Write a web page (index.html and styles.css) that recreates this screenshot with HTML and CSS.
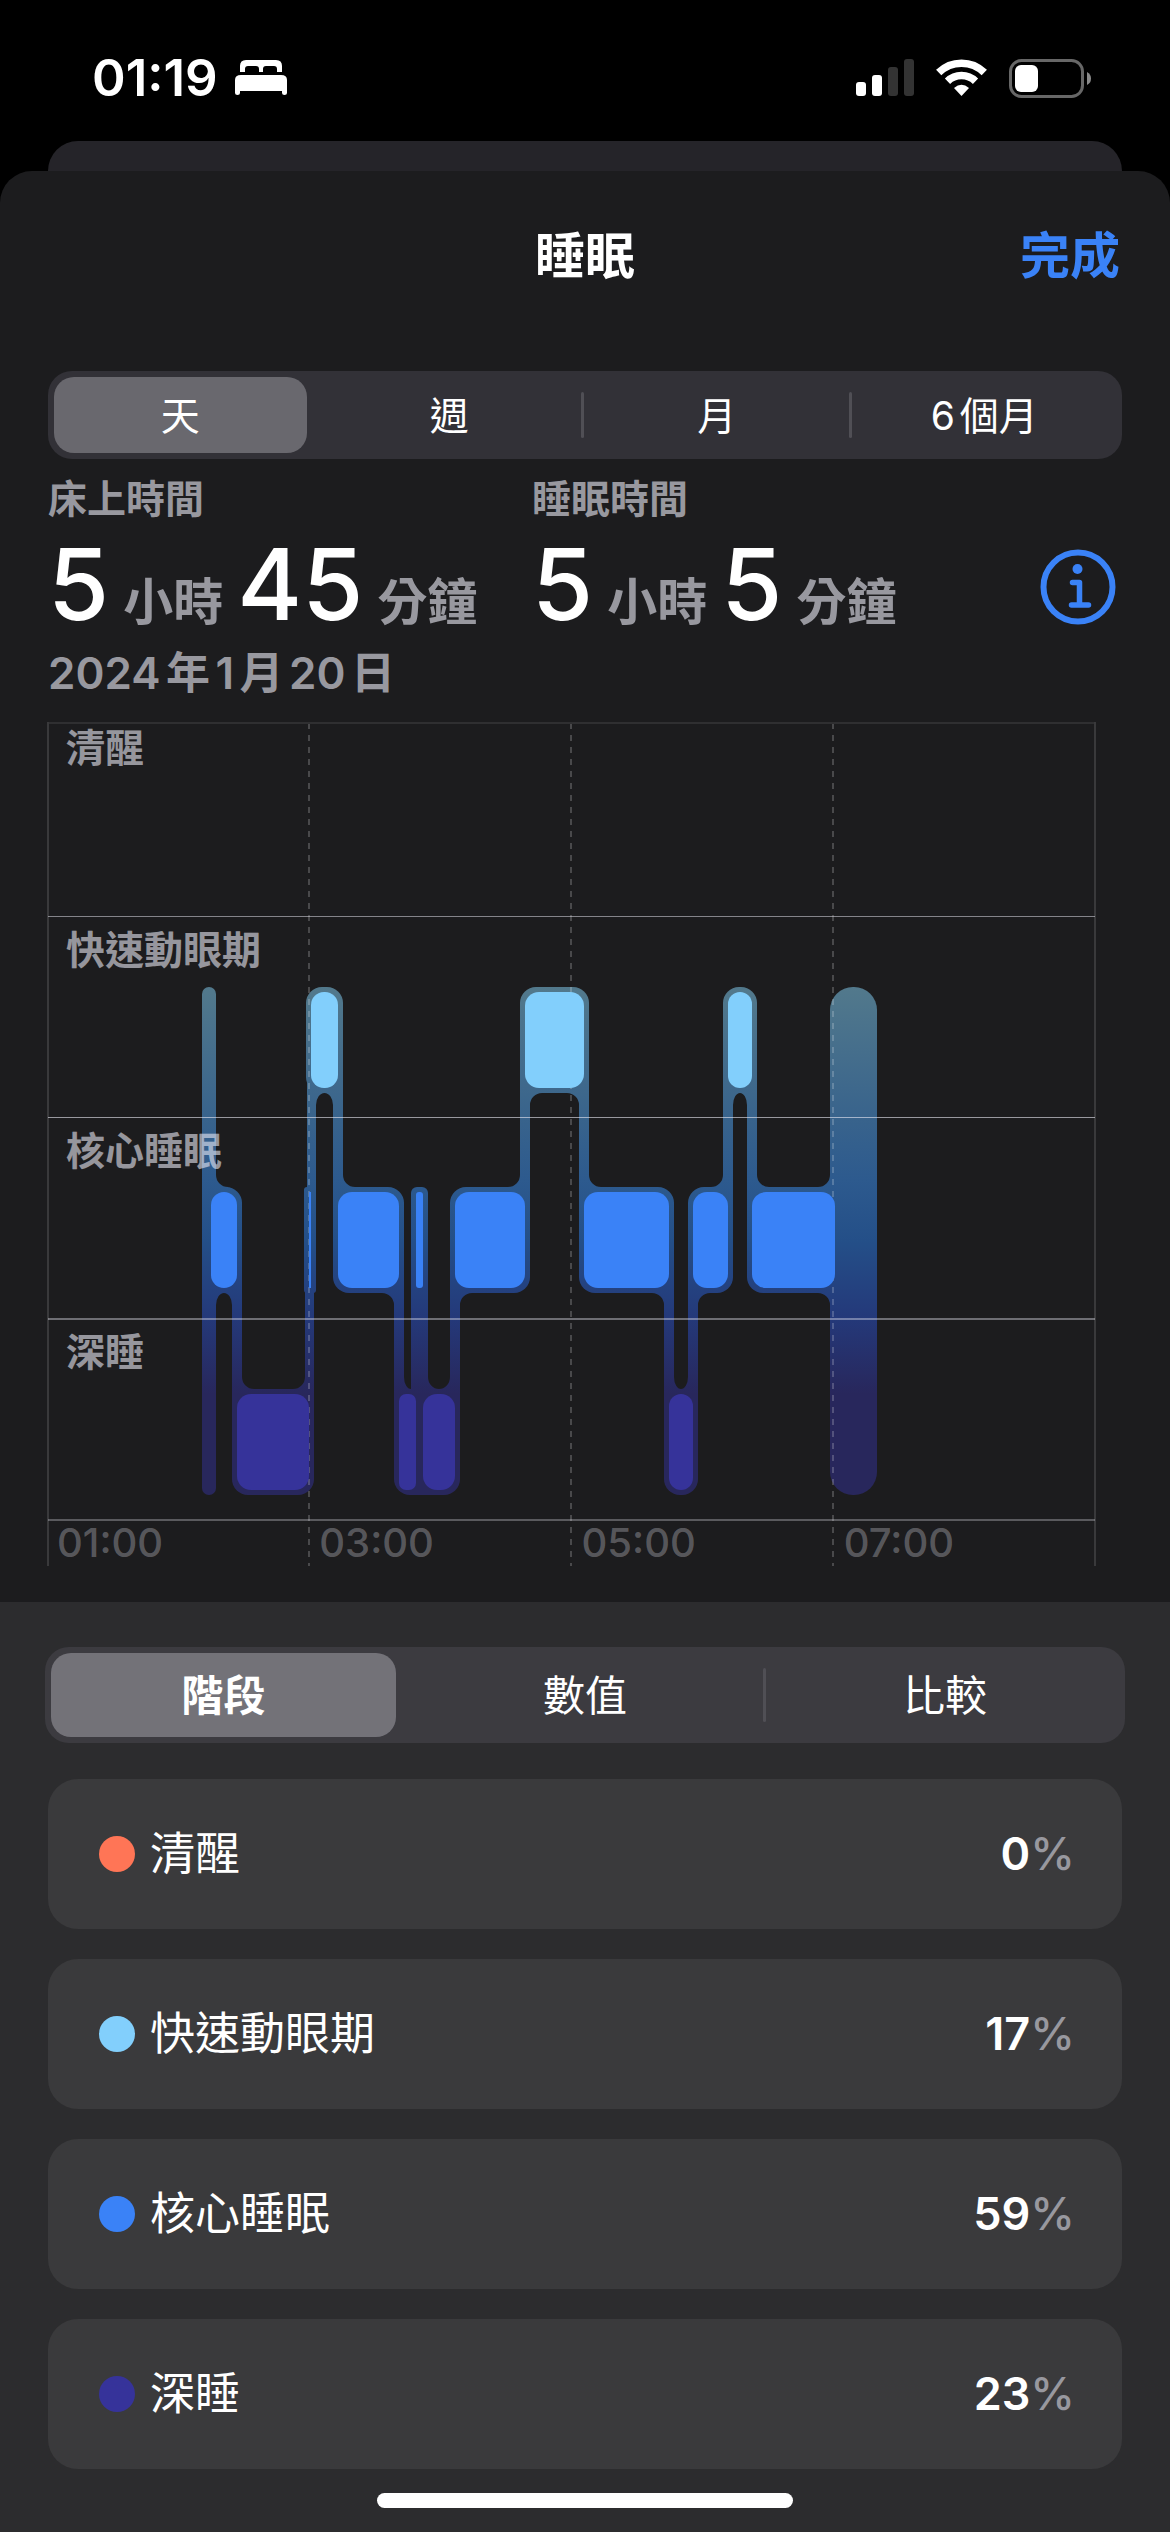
FILE: index.html
```html
<!DOCTYPE html>
<html lang="zh-Hant">
<head>
<meta charset="utf-8">
<meta name="viewport" content="width=device-width, initial-scale=1">
<title>睡眠</title>
<link rel="stylesheet" href="styles.css">
</head>
<body>
<div class="status-bar">
  <div class="status-left">
    <span class="clock">01:19</span>
    <svg class="icon" width="52" height="36" viewBox="0 0 52 36" fill="#fff" aria-hidden="true">
      <path d="M5 12V6q0-6 6-6h30q6 0 6 6v6h-5V9q0-3-3-3h-8q-3 0-3 3v3h-4V9q0-3-3-3h-8q-3 0-3 3v3z"/>
      <path d="M0 20q0-5 6-5h40q6 0 6 5v13q0 2-2.500 2T47 33v-2H5v2q0 2-2.500 2T0 33z"/>
    </svg>
  </div>
  <div class="status-right">
    <svg class="icon" width="58" height="38" viewBox="0 0 58 38" fill="#fff" aria-hidden="true">
      <rect x="0" y="23" width="10" height="14" rx="3"/>
      <rect x="16" y="16" width="10" height="21" rx="3"/>
      <rect x="32" y="8" width="10" height="29" rx="3" fill="#333"/>
      <rect x="48" y="0" width="10" height="37" rx="3" fill="#333"/>
    </svg>
    <svg class="icon" width="51" height="38" viewBox="0 0 51 38" aria-hidden="true">
      <g fill="none" stroke="#fff" stroke-width="7.500">
        <path d="M2.700 13.500a32.500 32.500 0 0 1 45.600 0"/>
        <path d="M11.500 22.300a20 20 0 0 1 28 0"/>
      </g>
      <path d="M25.500 37 18 29q7.500-6.500 15 0z" fill="#fff"/>
    </svg>
    <svg class="icon" width="82" height="39" viewBox="0 0 82 39" aria-hidden="true">
      <rect x="1.500" y="1.500" width="72" height="36" rx="11" fill="none" stroke="#676767" stroke-width="3"/>
      <rect x="6" y="6" width="23" height="27" rx="6" fill="#fff"/>
      <path d="M78 13q4 2 4 6.500T78 26z" fill="#8a8a8a"/>
    </svg>
  </div>
</div>
<div class="backdrop"></div>
<main class="sheet">
  <header class="sheet-header">
    <h1 class="title">睡眠</h1>
    <button class="done" type="button">完成</button>
  </header>

  <div class="segments range" role="group" aria-label="範圍">
    <button class="segment selected" type="button" aria-pressed="true">天</button>
    <button class="segment" type="button" aria-pressed="false">週</button>
    <button class="segment divided" type="button" aria-pressed="false">月</button>
    <button class="segment divided" type="button" aria-pressed="false">6個月</button>
  </div>

  <section class="summary">
    <div class="stat">
      <h2 class="stat-label">床上時間</h2>
      <p class="stat-value"><b>5</b><span>小時</span><b>45</b><span>分鐘</span></p>
    </div>
    <div class="stat">
      <h2 class="stat-label">睡眠時間</h2>
      <p class="stat-value"><b>5</b><span>小時</span><b>5</b><span>分鐘</span></p>
    </div>
    <button class="info" type="button" aria-label="資訊">
      <svg class="icon" width="76" height="76" viewBox="0 0 76 76" aria-hidden="true">
        <circle cx="38" cy="38" r="34.500" fill="none" stroke="#3a82f7" stroke-width="6"/>
        <circle cx="37.500" cy="20" r="5" fill="#3a82f7"/>
        <path d="M32.500 33.500h7V56M31.500 56h17" fill="none" stroke="#3a82f7" stroke-width="5.500" stroke-linecap="round" stroke-linejoin="round"/>
      </svg>
    </button>
  </section>
  <p class="date">2024年1月20日</p>

  <section class="chart" aria-label="睡眠階段">
    <svg class="plot" viewBox="47 722 1049 844" aria-hidden="true">
      <defs>
        <linearGradient id="stages" gradientUnits="userSpaceOnUse" x1="0" y1="987" x2="0" y2="1495">
          <stop offset="0" stop-color="#52798c"/>
          <stop offset=".26" stop-color="#38638c"/>
          <stop offset=".38" stop-color="#2d5a8e"/>
          <stop offset=".5" stop-color="#244f88"/>
          <stop offset=".65" stop-color="#24397a"/>
          <stop offset=".8" stop-color="#28275c"/>
          <stop offset="1" stop-color="#28275c"/>
        </linearGradient>
      </defs>
      <g fill="url(#stages)">
        <!-- time in bed -->
        <rect x="202" y="987" width="14" height="508" rx="7"/>
        <rect x="830" y="987" width="47" height="508" rx="23"/>
        <!-- REM -->
        <rect x="306" y="987" width="37" height="106" rx="16"/>
        <rect x="520" y="987" width="69" height="106" rx="16"/>
        <rect x="723" y="987" width="34" height="106" rx="16"/>
        <!-- core -->
        <rect x="206" y="1187" width="36" height="106" rx="16"/>
        <rect x="304" y="1187" width="12" height="106" rx="3"/>
        <rect x="333" y="1187" width="71" height="106" rx="16"/>
        <rect x="411" y="1187" width="17" height="106" rx="6"/>
        <rect x="450" y="1187" width="80" height="106" rx="16"/>
        <rect x="579" y="1187" width="95" height="106" rx="16"/>
        <rect x="688" y="1187" width="45" height="106" rx="16"/>
        <rect x="747" y="1187" width="93" height="106" rx="16"/>
        <!-- deep -->
        <rect x="232" y="1389" width="82" height="106" rx="16"/>
        <rect x="394" y="1389" width="66" height="106" rx="16"/>
        <rect x="664" y="1389" width="34" height="106" rx="16"/>
        <!-- transitions -->
        <path d="M232 1240h10v200h-10zM305 1240h9v200h-9zM307 1040h9v200h-9zM333 1040h10v200h-10zM394 1240h10v200h-10zM411 1240h17v200h-17zM450 1240h10v200h-10zM520 1040h10v200h-10zM579 1040h10v200h-10zM664 1240h10v200h-10zM688 1240h10v200h-10zM723 1040h10v200h-10zM747 1040h10v200h-10z"/>
        <!-- rounded joints -->
        <path d="M216 1189h12v-2a12 12 0 0 1-12-12zM343 1189h12v-2a12 12 0 0 1-12-12zM589 1189h12v-2a12 12 0 0 1-12-12zM757 1189h12v-2a12 12 0 0 1-12-12z"/>
        <path d="M520 1189h-12v-2a12 12 0 0 0 12-12zM723 1189h-12v-2a12 12 0 0 0 12-12zM830 1189h-12v-2a12 12 0 0 0 12-12z"/>
        <path d="M394 1291h-12v2a12 12 0 0 1 12 12zM664 1291h-12v2a12 12 0 0 1 12 12zM830 1291h-12v2a12 12 0 0 1 12 12zM460 1291h12v2a12 12 0 0 0-12 12zM698 1291h12v2a12 12 0 0 0-12 12z"/>
        <path d="M216 1291h16v14a8 12 0 0 0-8-12a8 12 0 0 0-8 12z"/>
        <path d="M316 1091h17v14a8.500 12 0 0 0-8.500-12a8.500 12 0 0 0-8.500 12zM733 1091h14v14a7 12 0 0 0-7-12a7 12 0 0 0-7 12zM530 1091h49v14a12 12 0 0 0-12-12h-25a12 12 0 0 0-12 12z"/>
        <path d="M242 1391h12v-2a12 12 0 0 1-12-12zM305 1391h-12v-2a12 12 0 0 0 12-12z"/>
        <path d="M404 1391h7v-2a7 12 0 0 1-7-12zM428 1391h22v-14a11 12 0 0 1-11 12a11 12 0 0 1-11-12zM674 1391h14v-14a7 12 0 0 1-7 12a7 12 0 0 1-7-12z"/>
      </g>
      <g stroke="#fff" stroke-opacity=".2" stroke-width="2" stroke-dasharray="6 6">
        <path d="M309 723v843M571 723v843M833 723v843"/>
      </g>
      <g fill="#82cffc">
        <rect x="311" y="992" width="27" height="96" rx="13"/>
        <rect x="525" y="992" width="59" height="96" rx="14"/>
        <rect x="728" y="992" width="24" height="96" rx="12"/>
      </g>
      <g fill="#3a82f7">
        <rect x="211" y="1192" width="26" height="96" rx="13"/>
        <rect x="309" y="1192" width="2" height="96"/>
        <rect x="338" y="1192" width="61" height="96" rx="14"/>
        <rect x="416" y="1192" width="7" height="96" rx="3"/>
        <rect x="455" y="1192" width="70" height="96" rx="14"/>
        <rect x="584" y="1192" width="85" height="96" rx="14"/>
        <rect x="693" y="1192" width="35" height="96" rx="14"/>
        <rect x="752" y="1192" width="83" height="96" rx="14"/>
      </g>
      <g fill="#36339a">
        <rect x="237" y="1394" width="72" height="96" rx="14"/>
        <rect x="399" y="1394" width="17" height="96" rx="7"/>
        <rect x="423" y="1394" width="32" height="96" rx="14"/>
        <rect x="669" y="1394" width="24" height="96" rx="12"/>
      </g>
      <path d="M47 723h1049" stroke="#2f2f31" stroke-width="2"/>
      <path d="M48 722v844M1095 722v844" stroke="#39393b" stroke-width="2"/>
      <g fill="#ebebf5">
        <rect x="48" y="916" width="1047" height="1" opacity=".5"/>
        <rect x="48" y="1117" width="1047" height="1" opacity=".6"/>
        <rect x="48" y="1318" width="1047" height="2" opacity=".4"/>
        <rect x="48" y="1519" width="1047" height="2" opacity=".3"/>
      </g>
    </svg>
    <div class="labels">
      <div class="stage-label first">清醒</div>
      <div class="stage-label">快速動眼期</div>
      <div class="stage-label">核心睡眠</div>
      <div class="stage-label">深睡</div>
      <div class="hours"><span>01:00</span><span>03:00</span><span>05:00</span><span>07:00</span></div>
    </div>
  </section>

  <section class="panel">
    <div class="segments views" role="group" aria-label="檢視">
      <button class="segment selected" type="button" aria-pressed="true">階段</button>
      <button class="segment" type="button" aria-pressed="false">數值</button>
      <button class="segment divided" type="button" aria-pressed="false">比較</button>
    </div>
    <ul class="cards">
      <li class="card"><i class="dot awake"></i><span class="name">清醒</span><span class="percent"><b>0</b>%</span></li>
      <li class="card"><i class="dot rem"></i><span class="name">快速動眼期</span><span class="percent"><b>17</b>%</span></li>
      <li class="card"><i class="dot core"></i><span class="name">核心睡眠</span><span class="percent"><b>59</b>%</span></li>
      <li class="card"><i class="dot deep"></i><span class="name">深睡</span><span class="percent"><b>23</b>%</span></li>
    </ul>
    <div class="home-indicator"></div>
  </section>
</main>
</body>
</html>
```
FILE: styles.css
```css
* {
  box-sizing: border-box;
}

body {
  margin: 0;
  background: #000;
  color: #fff;
  font-family: Inter, "Noto Sans CJK TC", sans-serif;
  text-autospace: normal;
}

h1, h2, p, ul {
  margin: 0;
  padding: 0;
}

button {
  margin: 0;
  padding: 0;
  border: 0;
  background: none;
  color: inherit;
  font: inherit;
}

.icon {
  display: block;
  flex: none;
}

/* Status bar */
.status-bar {
  display: flex;
  align-items: center;
  justify-content: space-between;
  height: 141px;
  padding: 15px 79px 0 92px;
}

.status-left {
  display: flex;
  align-items: center;
  gap: 17px;
}

.status-right {
  display: flex;
  align-items: center;
  gap: 22px;
}

.clock {
  font-size: 51px;
  font-weight: 600;
  line-height: 60px;
}

/* Sheet */
.backdrop {
  height: 30px;
  margin: 0 48px;
  border-radius: 30px 30px 0 0;
  background: #252429;
}

.sheet {
  border-radius: 32px 32px 0 0;
  background: #1c1c1e;
}

.sheet-header {
  display: grid;
  grid-template-columns: 1fr auto 1fr;
  align-items: center;
  height: 166px;
  padding: 4px 50px 0;
}

.title,
.done {
  font-size: 50px;
  font-weight: 700;
  line-height: 60px;
}

.title {
  grid-column: 2;
}

.done {
  justify-self: end;
  color: #3a82f7;
}

/* Segmented controls */
.segments {
  display: grid;
  grid-auto-flow: column;
  grid-auto-columns: 1fr;
  border-radius: 24px;
}

.segment {
  position: relative;
  margin: 6px;
  padding-bottom: 5px;
  border-radius: 20px;
}

.selected {
  margin-right: 9px;
}

.divided::before {
  content: "";
  position: absolute;
  top: 15px;
  bottom: 15px;
  left: -8px;
  width: 3px;
  border-radius: 2px;
  background: #504f55;
}

.range {
  height: 88px;
  margin: 34px 48px 0;
  padding-right: 4px;
  background: #323137;
  font-size: 39px;
}

.range .selected {
  background: #69686e;
}

.views {
  height: 96px;
  margin: 0 45px;
  background: #3c3b40;
  font-size: 42px;
}

.views .selected {
  background: #737278;
  font-weight: 700;
}

/* Summary */
.summary {
  display: grid;
  grid-template-columns: 484px 1fr auto;
  align-items: start;
  margin: 16px 54px 0 48px;
}

.stat-label {
  color: #98989f;
  font-size: 39px;
  font-weight: 600;
  line-height: 48px;
}

.stat-value {
  display: flex;
  align-items: baseline;
  height: 121px;
  color: #98989f;
  font-size: 50px;
  font-weight: 600;
  line-height: 122px;
}

.stat-value b {
  color: #fff;
  font-size: 99px;
  font-weight: 500;
}

.stat-value span {
  margin: 0 14px;
}

.info {
  margin-top: 74px;
}

.date {
  margin-left: 48px;
  color: #98989f;
  font-size: 44px;
  font-weight: 600;
  line-height: 58px;
}

/* Chart */
.chart {
  display: grid;
  margin: 20px 74px 36px 47px;
}

.plot {
  grid-area: 1 / 1;
  display: block;
  width: 100%;
}

.labels {
  grid-area: 1 / 1;
  display: grid;
  grid-template-rows: 194fr 201fr 201fr 202fr 46fr;
  z-index: 1;
}

.stage-label {
  padding: 10px 0 0 19px;
  color: rgba(235, 235, 245, .6);
  font-size: 39px;
  font-weight: 600;
  line-height: 48px;
}

.stage-label.first {
  padding-top: 2px;
}

.hours {
  display: grid;
  grid-template-columns: repeat(4, 1fr);
  color: rgba(235, 235, 245, .3);
  font-size: 40px;
  font-weight: 500;
  line-height: 46px;
}

.hours span {
  padding-left: 10px;
}

/* Breakdown */
.panel {
  padding: 45px 0 24px;
  background: #2c2c2e;
}

.cards {
  display: grid;
  gap: 30px;
  margin: 36px 48px 24px;
  list-style: none;
}

.card {
  display: flex;
  align-items: center;
  height: 150px;
  padding: 0 47px 0 51px;
  border-radius: 30px;
  background: #3a3a3c;
  font-size: 45px;
  line-height: 60px;
}

.dot {
  width: 36px;
  height: 36px;
  margin-right: 15px;
  border-radius: 50%;
}

.awake {
  background: #ff7556;
}

.rem {
  background: #82cffc;
}

.core {
  background: #3a82f7;
}

.deep {
  background: #36339a;
}

.percent {
  margin-left: auto;
  color: #98989f;
  font-weight: 500;
}

.percent b {
  color: #fff;
  font-weight: 600;
}

.home-indicator {
  width: 416px;
  height: 15px;
  margin: 0 auto;
  border-radius: 8px;
  background: #fff;
}
```
